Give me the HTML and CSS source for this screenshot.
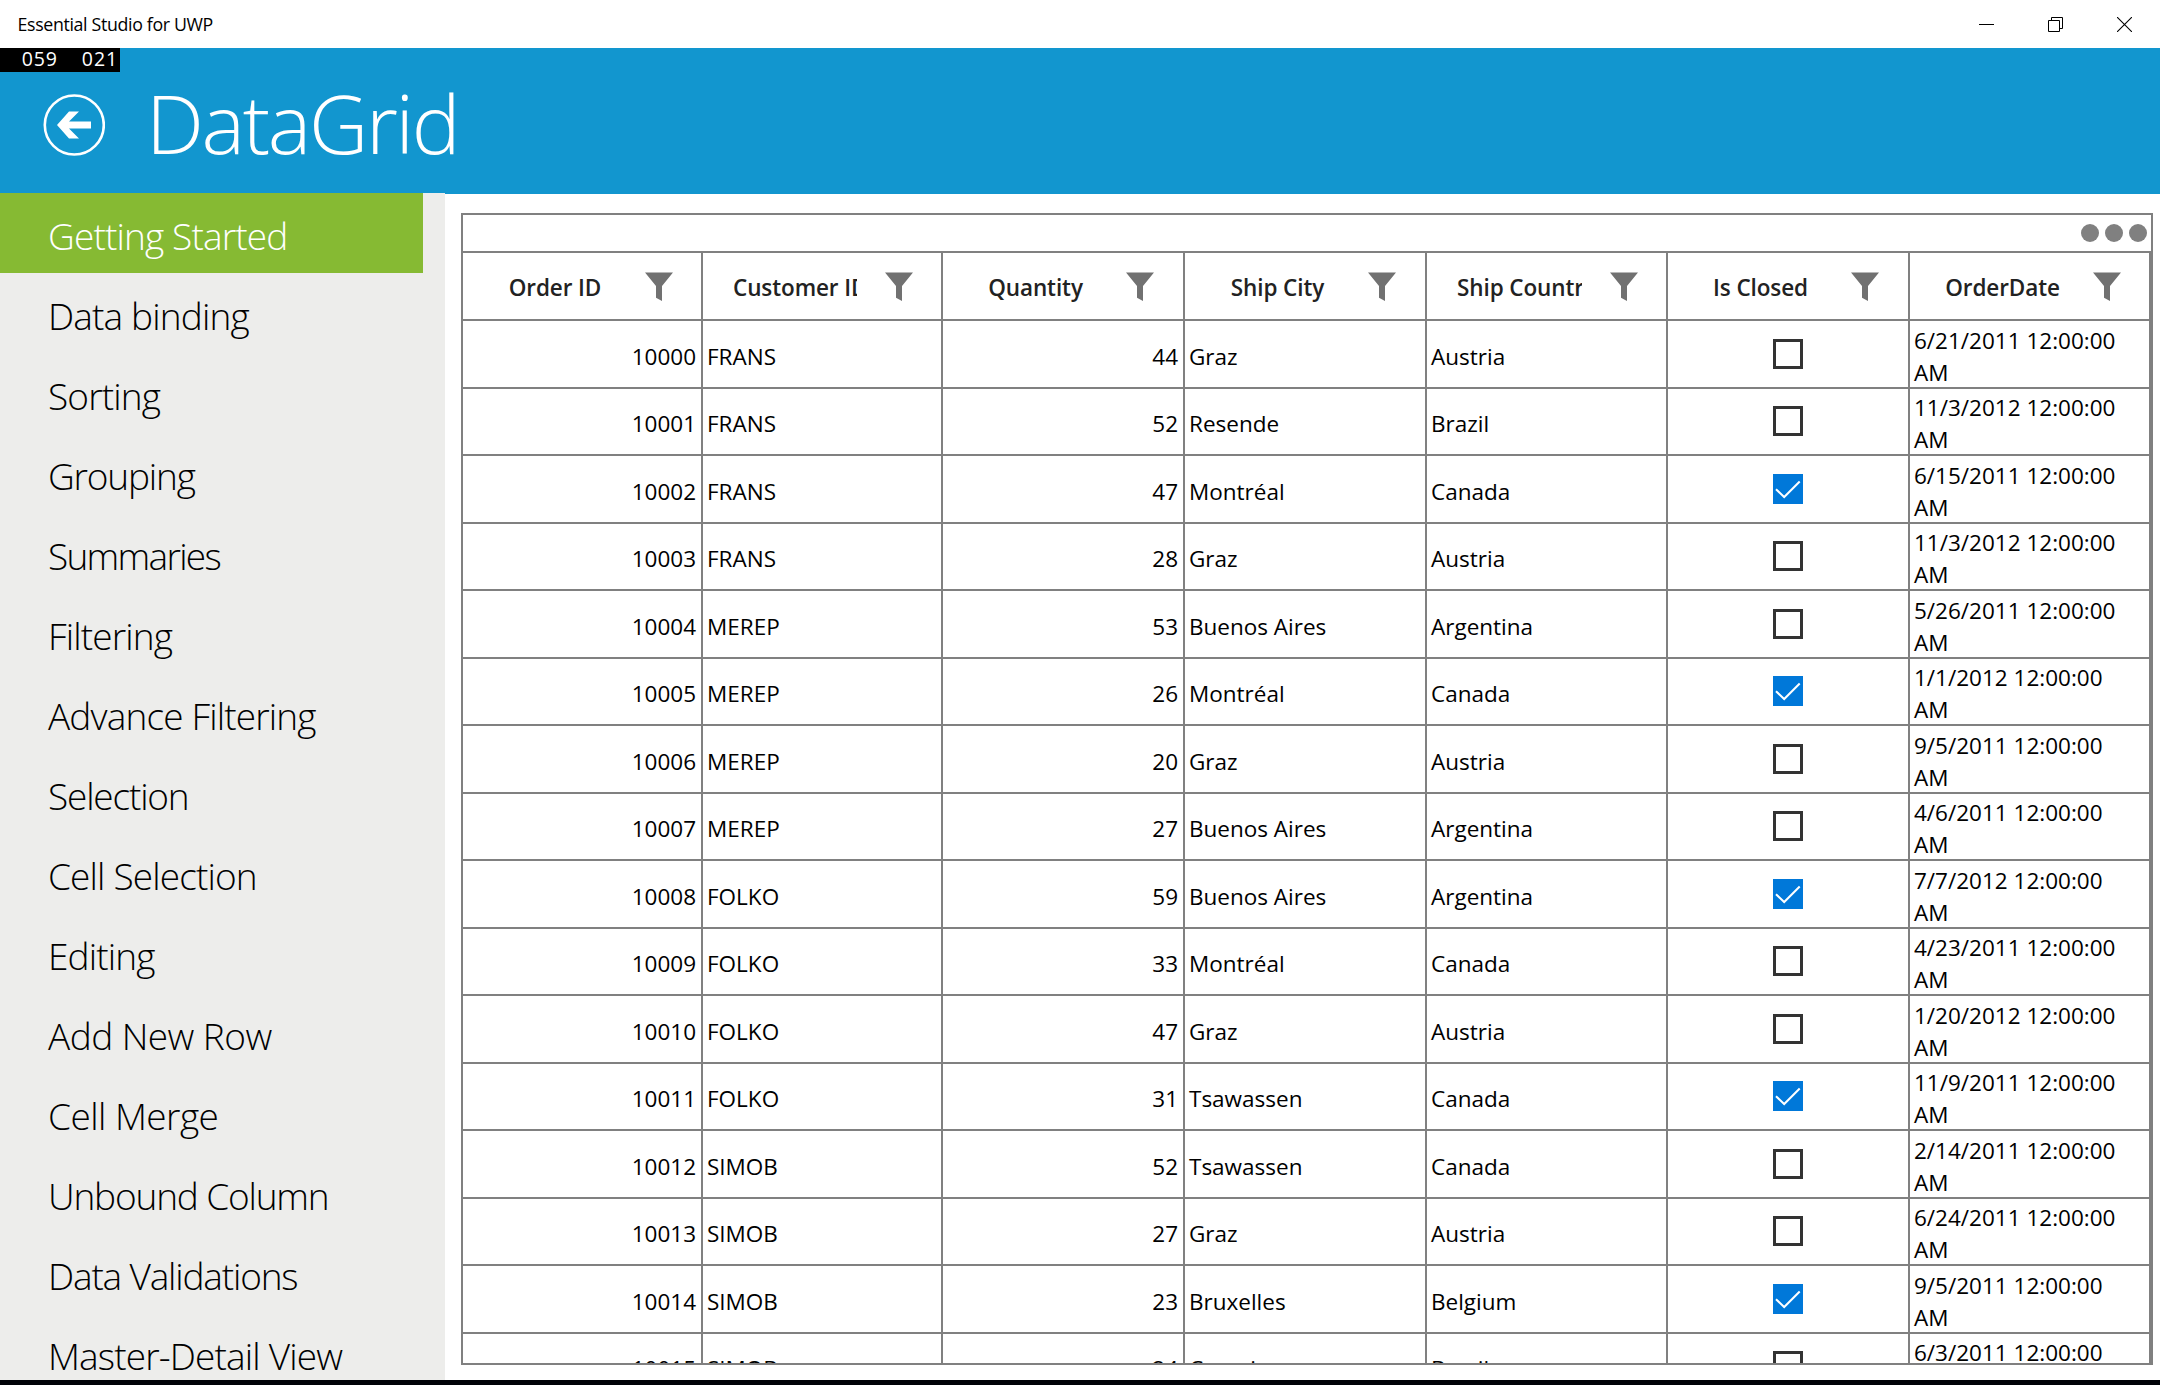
FILE: index.html
```html
<!DOCTYPE html>
<html lang="en">
<head>
<meta charset="utf-8">
<title>Essential Studio for UWP</title>
<link rel="stylesheet" href="styles.css">
</head>
<body>
<svg class="defs" width="0" height="0" aria-hidden="true">
  <symbol id="funnel" viewBox="0 0 28 29"><path d="M0 0.5H28L17 14V29L11 25.8V14Z" fill="#717171"/></symbol>
  <symbol id="check" viewBox="0 0 30 30"><path d="M3 15.2L11.2 23L26.7 7.5" fill="none" stroke="#fff" stroke-width="2"/></symbol>
</svg>
<div class="titlebar">
  <span class="app-name">Essential Studio for UWP</span>
  <div class="window-buttons">
    <svg width="15" height="15" viewBox="0 0 15 15"><path d="M0 7.5H15" stroke="#000"/></svg>
    <svg width="15" height="15" viewBox="0 0 15 15"><path d="M.5 3.5H11.5V14.5H.5ZM3.5 3.5V.5H14.5V11.5H11.5" fill="none" stroke="#000"/></svg>
    <svg width="15" height="15" viewBox="0 0 15 15"><path d="M0 0L15 15M15 0L0 15" stroke="#000" stroke-width="1.1"/></svg>
  </div>
</div>
<header class="header">
  <div class="counter"><span>059</span><span>021</span></div>
  <svg class="back" width="62" height="62" viewBox="0 0 62 62"><circle cx="31.3" cy="31" r="29.5" fill="none" stroke="#fff" stroke-width="2.6"/><path d="M14 31L26 17.5H36L26 27.5H48V34.5H26L36 44.5H26Z" fill="#fff"/></svg>
  <h1 class="title">DataGrid</h1>
</header>
<div class="body">
  <nav class="sidebar">
    <a class="item active">Getting Started</a>
    <a class="item">Data binding</a>
    <a class="item">Sorting</a>
    <a class="item tight">Grouping</a>
    <a class="item tighter">Summaries</a>
    <a class="item">Filtering</a>
    <a class="item">Advance Filtering</a>
    <a class="item tight">Selection</a>
    <a class="item">Cell Selection</a>
    <a class="item">Editing</a>
    <a class="item loose">Add New Row</a>
    <a class="item loose">Cell Merge</a>
    <a class="item tight">Unbound Column</a>
    <a class="item tight">Data Validations</a>
    <a class="item">Master-Detail View</a>
  </nav>
  <main class="panel">
    <div class="toolbar"><i class="dot"></i><i class="dot"></i><i class="dot"></i></div>
    <div class="grid" id="grid"></div>
  </main>
</div>
<script src="grid.js"></script>
</body>
</html>
```
FILE: styles.css
```css
* { box-sizing: border-box; }
body {
  margin: 0;
  width: 2160px;
  height: 1385px;
  overflow: hidden;
  display: flex;
  flex-direction: column;
  background: #000207;
  font-family: "Open Sans", "Noto Sans", sans-serif;
  color: #000;
}
.defs { position: absolute; }
.titlebar {
  height: 48px;
  flex: none;
  background: #fff;
  display: flex;
  align-items: center;
  justify-content: space-between;
  padding: 0 28px 0 17.5px;
}
.app-name { font-size: 17.8px; letter-spacing: -0.35px; }
.window-buttons { display: flex; gap: 54px; }
.window-buttons svg { display: block; }

.header {
  height: 146px;
  flex: none;
  background: #1296cf;
  color: #fff;
  position: relative;
  display: flex;
  align-items: center;
  padding: 7px 0 0 43px;
}
.counter {
  position: absolute;
  left: 0;
  top: 0;
  width: 120px;
  height: 24px;
  background: #000;
  display: flex;
  justify-content: flex-end;
  gap: 24px;
  padding-right: 2px;
  font-size: 19.5px;
  font-weight: 500;
  line-height: 22px;
  letter-spacing: 0.9px;
}
.title {
  margin: 0 0 6px 41px;
  font-size: 82px;
  font-weight: 300;
  line-height: 100px;
  letter-spacing: -2.3px;
}

.body { display: flex; height: 1186px; flex: none; background: #fff; }
.sidebar {
  width: 445px;
  flex: none;
  height: 1187px;
  margin-top: -1px;
  background: #ededeb;
  overflow: hidden;
  position: relative;
}
.item {
  display: block;
  width: 423px;
  height: 80px;
  padding-left: 48px;
  line-height: 86px;
  font-size: 37px;
  font-weight: 300;
  letter-spacing: -0.85px;
  white-space: nowrap;
}
.tight { letter-spacing: -1.17px; }
.tighter { letter-spacing: -1.7px; }
.loose { letter-spacing: -0.55px; }
.active { background: #86ba33; color: #fff; }

.panel {
  width: 1692px;
  height: 1152px;
  margin: 19px 0 0 16px;
  border: 2px solid #808080;
  display: flex;
  flex-direction: column;
  overflow: hidden;
}
.toolbar {
  height: 38px;
  flex: none;
  border-bottom: 2px solid #808080;
  display: flex;
  justify-content: flex-end;
  align-items: center;
  gap: 6px;
  padding-right: 4px;
}
.dot { width: 18px; height: 18px; border-radius: 50%; background: #808080; }

.grid { border-right: 2px solid #808080; width: 1688px; flex: none; }
.row {
  display: grid;
  grid-template-columns: 240px 240px 242px 242px 241px 242px 239px;
  height: 67px;
  border-bottom: 2px solid #808080;
  font-size: 22.5px;
}
.row:nth-child(even) { height: 68px; }
.row.head { height: 68px; font-weight: 600; color: #222; letter-spacing: -0.1px; }
.cell {
  border-right: 2px solid #808080;
  padding: 4px 4px 0 4px;
  line-height: 62px;
  white-space: nowrap;
  overflow: hidden;
}
.row:nth-child(even) .cell { padding-top: 5px; }
.cell:last-child { border-right: 0; }
.num { text-align: right; padding-right: 5px; }
.row .date { line-height: 32px; padding: 3px 4px 0; }
.row:nth-child(even) .date { padding-top: 4px; }
.row .flag { display: flex; justify-content: center; padding: 17px 0 0; }
.row:nth-child(even) .flag { padding-top: 18px; }
.box { width: 30px; height: 30px; flex: none; border: 3px solid #333; }
.box.on { border: 0; background: #0078d9; }
.box svg { display: block; }
.head .cell { display: flex; padding: 0 0 0 30px; }
.label { width: 124px; flex: none; display: flex; justify-content: safe center; overflow: hidden; line-height: 69px; }
.head .cell:nth-child(n+3) .label { width: 125px; }
.funnel { margin: 19px 0 0 28px; flex: none; }
```
FILE: grid.js
```js
const columns = ["Order ID", "Customer ID", "Quantity", "Ship City", "Ship Country", "Is Closed", "OrderDate"];
const orders = [
  [10000, "FRANS", 44, "Graz", "Austria", false, "6/21/2011"],
  [10001, "FRANS", 52, "Resende", "Brazil", false, "11/3/2012"],
  [10002, "FRANS", 47, "Montréal", "Canada", true, "6/15/2011"],
  [10003, "FRANS", 28, "Graz", "Austria", false, "11/3/2012"],
  [10004, "MEREP", 53, "Buenos Aires", "Argentina", false, "5/26/2011"],
  [10005, "MEREP", 26, "Montréal", "Canada", true, "1/1/2012"],
  [10006, "MEREP", 20, "Graz", "Austria", false, "9/5/2011"],
  [10007, "MEREP", 27, "Buenos Aires", "Argentina", false, "4/6/2011"],
  [10008, "FOLKO", 59, "Buenos Aires", "Argentina", true, "7/7/2012"],
  [10009, "FOLKO", 33, "Montréal", "Canada", false, "4/23/2011"],
  [10010, "FOLKO", 47, "Graz", "Austria", false, "1/20/2012"],
  [10011, "FOLKO", 31, "Tsawassen", "Canada", true, "11/9/2011"],
  [10012, "SIMOB", 52, "Tsawassen", "Canada", false, "2/14/2011"],
  [10013, "SIMOB", 27, "Graz", "Austria", false, "6/24/2011"],
  [10014, "SIMOB", 23, "Bruxelles", "Belgium", true, "9/5/2011"],
  [10015, "SIMOB", 24, "Campinas", "Brazil", false, "6/3/2011"]
];
const head = columns.map(c => `<div class="cell"><span class="label">${c}</span><svg class="funnel" width="28" height="29"><use href="#funnel"/></svg></div>`).join("");
const rows = orders.map(([id, customer, qty, city, country, closed, date]) => `<div class="row">
  <div class="cell num">${id}</div><div class="cell">${customer}</div><div class="cell num">${qty}</div>
  <div class="cell">${city}</div><div class="cell">${country}</div>
  <div class="cell flag"><span class="box${closed ? " on" : ""}">${closed ? '<svg width="30" height="30"><use href="#check"/></svg>' : ""}</span></div>
  <div class="cell date">${date} 12:00:00<br>AM</div></div>`).join("");
document.getElementById("grid").innerHTML = `<div class="row head">${head}</div>${rows}`;
```
